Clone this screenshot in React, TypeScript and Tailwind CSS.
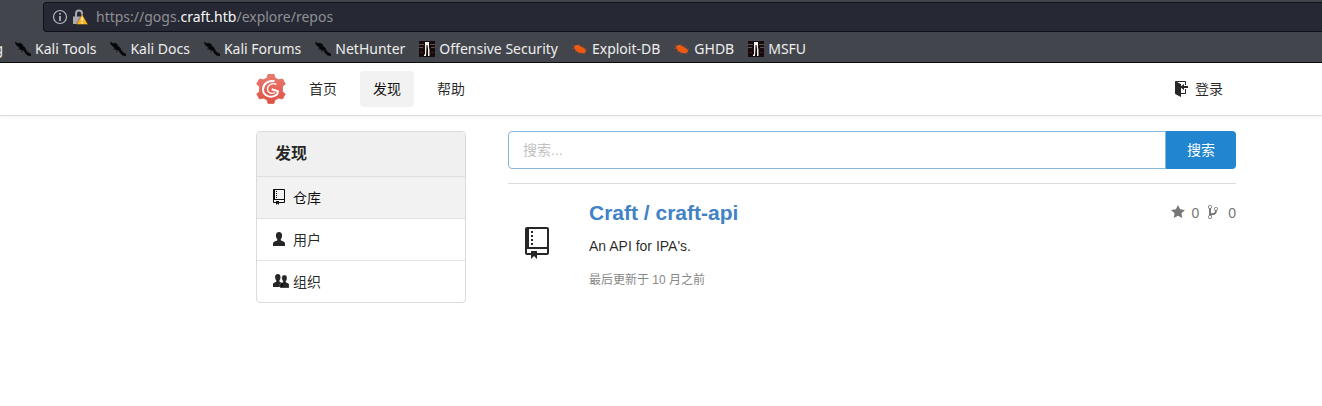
import type { ReactNode } from "react";

const REPO_PATH =
  "M4 9H3V8h1v1zm0-3H3v1h1V6zm0-2H3v1h1V4zm0-2H3v1h1V2zm8-1v12c0 .55-.45 1-1 1H6v2l-1.5-1.5L3 16v-2H1c-.55 0-1-.45-1-1V1c0-.55.45-1 1-1h10c.55 0 1 .45 1 1zm-1 10H1v2h2v-1h3v1h5v-2zm0-10H2v9h9V1z";
const SIGN_IN_PATH =
  "M7 6.75V12h4V8h1v4c0 .55-.45 1-1 1H7v3l-5.45-2.72c-.33-.17-.55-.52-.55-.91V1c0-.55.45-1 1-1h9c.55 0 1 .45 1 1v3h-1V1H3l4 2v2.25L10 3v2h4v2h-4v2L7 6.75z";
const STAR_PATH =
  "M14 6l-4.9-.64L7 1 4.9 5.36 0 6l3.6 3.26L2.67 14 7 11.67 11.33 14l-.93-4.74L14 6z";
const BRANCH_PATH =
  "M10 5c0-1.11-.89-2-2-2a1.993 1.993 0 0 0-1 3.72v.3c-.02.52-.23.98-.63 1.38-.4.4-.86.61-1.38.63-.83.02-1.48.16-2 .45V4.72a1.993 1.993 0 0 0-1-3.72C.88 1 0 1.89 0 3a2 2 0 0 0 1 1.72v6.56c-.59.35-1 .99-1 1.72 0 1.11.89 2 2 2 1.11 0 2-.89 2-2 0-.53-.2-1-.53-1.36.09-.06.48-.41.59-.47.25-.11.56-.17.94-.17 1.05-.05 1.95-.45 2.75-1.25S8.95 7.77 9 6.73h-.02C9.59 6.37 10 5.73 10 5zM2 1.8c.66 0 1.2.55 1.2 1.2 0 .65-.55 1.2-1.2 1.2C1.35 4.2.8 3.65.8 3c0-.65.55-1.2 1.2-1.2zm0 12.41c-.66 0-1.2-.55-1.2-1.2 0-.65.55-1.2 1.2-1.2.65 0 1.2.55 1.2 1.2 0 .65-.55 1.2-1.2 1.2zm6-8c-.66 0-1.2-.55-1.2-1.2 0-.65.55-1.2 1.2-1.2.65 0 1.2.55 1.2 1.2 0 .65-.55 1.2-1.2 1.2z";
const PERSON_PATH =
  "M6 0c2 0 3.100 1.400 3.100 3.600 0 1.500-.5 2.800-1.300 3.600v1c.3.500 1.200.7 2.200 1.100 1.500.5 2 1.200 2 2.700v2H0v-2c0-1.500.6-2.200 2.100-2.700 1-.4 1.900-.6 2.200-1.100v-1C3.500 6.400 2.900 5.100 2.900 3.600 2.900 1.400 4 0 6 0z";

function KaliIcon() {
  return (
    <svg viewBox="0 0 16 16" className="size-4 shrink-0" aria-hidden="true">
      <path
        d="M0 1l3 1.500 2-.5 2.500 1.500.5 2 2 1 1 2.500 2 2.500 3 1.500V15l-3.500-.7-2.500-2.500-1-2.300-2.500-.5-1.500-1L4 6 1.500 4.200z"
        fill="#050607"
        stroke="#050607"
        strokeWidth=".4"
      />
      <path d="M3 8l2 .5M6 10.500l1.500.2" stroke="#17181b" strokeWidth=".8" />
    </svg>
  );
}

function OffsecIcon() {
  return (
    <svg viewBox="0 0 16 16" className="size-4 shrink-0" aria-hidden="true">
      <path d="M0 0h16v16H0z" fill="#160b0c" />
      <path d="M0 3.500h5M11 3.500h5M0 6.500h4M12 6.500h4" stroke="#60504f" />
      <path d="M1 11.500h3M12 11.500h3" stroke="#4b1512" />
      <path d="M6 1h4v5l.5 3v6H9V8L8.500 4H7.500L7.300 10 7 15H5v-1l1-1z" fill="#f4f2ed" />
    </svg>
  );
}

function BugIcon() {
  return (
    <svg viewBox="0 0 16 16" className="size-4 shrink-0" aria-hidden="true">
      <path
        d="M2 5.500C3.500 3.200 7 3.500 9 5.500l3.500 2 1.500 2-.5 2-2.500.8-3-.3C5 11 2 8.500 2 5.500z"
        fill="#ed5b12"
      />
      <path
        d="M3 5.500L.5 4.500M3.500 7.500L0 7.300M5 10l-2 .8M7 4.500L8 3M10 6.500l2.500-1M12.500 8.500l2.500-.3M8 11.500l-1.500 1.500M12 12l.5 1.500"
        stroke="#b04a1d"
        strokeWidth=".8"
      />
    </svg>
  );
}

function GogsLogo() {
  return (
    <svg viewBox="0 0 30 30" className="size-[30px]" aria-hidden="true">
      <defs>
        <linearGradient id="gear" x1="0" y1="0" x2="0" y2="1">
          <stop offset="0" stopColor="#ea7a70" />
          <stop offset="1" stopColor="#dd5044" />
        </linearGradient>
      </defs>
      <path
        d="M12 .5h6l1 3.500 3.500 1.800L26.500 5l2.800 5L26.500 12.500v5l2.800 2.500-2.800 5-4-.8L19 26l-1 3.500h-6L11 26l-3.500-1.800-4 .8L.7 20l2.800-2.500v-5L.7 10l2.800-5 4 .8L11 4z"
        fill="url(#gear)"
        stroke="#e0665c"
        strokeWidth=".8"
        strokeLinejoin="round"
      />
      <path
        d="M18.500 7.300C12 6 7 10 7 15.500c0 6.300 8.300 9.800 14.200 4.800l.8-3-6.300-2"
        fill="none"
        stroke="#fff"
        strokeWidth="2"
        strokeLinejoin="round"
      />
      <path
        d="M20.500 10.500c-4.500-2.200-9 .5-9 4.700 0 3.500 4 5.300 7.500 3.300"
        fill="none"
        stroke="#fff"
        strokeWidth="1.300"
      />
    </svg>
  );
}

function Octicon({ d, box, className }: { d: string; box: string; className: string }) {
  return (
    <svg viewBox={box} fill="currentColor" className={className} aria-hidden="true">
      <path d={d} />
    </svg>
  );
}

const bookmarks = [
  { label: "Kali Tools", icon: <KaliIcon /> },
  { label: "Kali Docs", icon: <KaliIcon /> },
  { label: "Kali Forums", icon: <KaliIcon /> },
  { label: "NetHunter", icon: <KaliIcon /> },
  { label: "Offensive Security", icon: <OffsecIcon /> },
  { label: "Exploit-DB", icon: <BugIcon /> },
  { label: "GHDB", icon: <BugIcon /> },
  { label: "MSFU", icon: <OffsecIcon /> },
];

function BrowserChrome() {
  return (
    <div className="border-b border-[#0c0c0d] bg-[#42454b] pt-0.5 font-['Noto_Sans',sans-serif]">
      <div className="ml-[43px] flex h-[30px] items-center rounded-l border border-r-0 border-[#101116] bg-[#262833] pl-2">
        <svg viewBox="0 0 16 16" className="size-4" fill="none" stroke="#b5b6ba" aria-hidden="true">
          <circle cx="8" cy="8" r="6.500" strokeWidth="1.200" />
          <path d="M8 4v1.800M8 7v5" strokeWidth="1.700" />
        </svg>
        <svg viewBox="0 0 16 16" className="ml-1 size-4" aria-hidden="true">
          <path d="M4 8V4.500a3 3 0 0 1 6 0V7" fill="none" stroke="#a9aaae" strokeWidth="2" />
          <path d="M1 7.500h9.500V15H1z" fill="#a9aaae" />
          <path d="M10 5L16 15.500H4.500z" fill="#ffb31a" stroke="#262833" strokeWidth=".4" />
          <path d="M10.200 8.500v3.300M10.200 13v1.400" stroke="#fff" strokeWidth="1.400" />
        </svg>
        <div className="ml-2 text-sm text-[#8f9095]">
          https://gogs.<span className="text-[#f9f9fa]">craft.htb</span>/explore/repos
        </div>
      </div>
      <nav
        className="flex h-[30px] items-center gap-3.5 overflow-hidden pt-1 text-sm whitespace-nowrap text-[#eeeeef]"
        aria-label="Bookmarks"
      >
        <div className="-mr-0.5 flex w-[3px] shrink-0 justify-end">g</div>
        {bookmarks.map((b) => (
          <a key={b.label} href="#" className="flex items-center gap-1">
            {b.icon}
            <span>{b.label}</span>
          </a>
        ))}
      </nav>
    </div>
  );
}

function NavLink({ children, active = false }: { children: ReactNode; active?: boolean }) {
  return (
    <a
      href="#"
      className={
        active
          ? "flex h-9 items-center rounded bg-[#f2f2f2] px-[13px] text-black/95"
          : "flex h-9 items-center rounded px-[13px] text-black/85"
      }
    >
      {children}
    </a>
  );
}

function SideItem({ icon, label, active = false }: { icon: ReactNode; label: string; active?: boolean }) {
  return (
    <a
      href="#"
      className={
        active
          ? "flex h-[42px] items-center border-t border-[#dededf] bg-[#f2f2f2] px-4 text-black/95"
          : "flex h-[42px] items-center border-t border-[#e2e2e3] px-4 text-black/85"
      }
    >
      <span className="flex w-5 items-center">{icon}</span>
      {label}
    </a>
  );
}

export default function App() {
  return (
    <div className="min-h-screen bg-white font-['Liberation_Sans','Noto_Sans_CJK_SC',sans-serif] text-sm text-black/85">
      <BrowserChrome />

      <header className="flex h-[53px] items-center border-b border-[#dcdcdd] pr-[86px] pl-64 shadow-[0_2px_3px_rgba(0,0,0,0.04)]">
        <a href="#" aria-label="Gogs">
          <GogsLogo />
        </a>
        <nav className="ml-2.5 flex gap-2.5">
          <NavLink>首页</NavLink>
          <NavLink active>发现</NavLink>
          <NavLink>帮助</NavLink>
        </nav>
        <div className="ml-auto">
          <NavLink>
            <Octicon d={SIGN_IN_PATH} box="0 0 14 16" className="mr-[7px] h-4 w-3.5" />
            登录
          </NavLink>
        </div>
      </header>

      <main className="flex items-start gap-[42px] pt-[15px] pr-[86px] pl-64">
        <aside className="w-[210px] shrink-0 overflow-hidden rounded border border-[#dbdbdc]">
          <h4 className="flex h-11 items-center bg-[#f0f0f0] px-[18px] text-base font-bold">发现</h4>
          <nav>
            <SideItem
              active
              label="仓库"
              icon={<Octicon d={REPO_PATH} box="0 0 12 16" className="mb-0.5 h-4 w-3" />}
            />
            <SideItem
              label="用户"
              icon={<Octicon d={PERSON_PATH} box="0 0 12 14" className="mb-0.5 h-3.5 w-3" />}
            />
            <SideItem
              label="组织"
              icon={
                <svg viewBox="0 0 16 14" className="mb-0.5 h-3.5 w-4" fill="currentColor" aria-hidden="true">
                  <path d="M4.800 0c1.800 0 2.700 1.200 2.700 3.200 0 1.500-.5 2.600-1.100 3.300v1c.3.600 1 .7 1.900 1.100 1 .4 1.400 1 1.400 2V13H0v-2.600c0-1.100.5-1.700 1.600-2 .9-.3 1.400-.4 1.700-1v-1C2.600 5.700 2.100 4.600 2.100 3.200 2.100 1.200 3 0 4.800 0z" />
                  <path
                    d="M11.400 1c1.700 0 2.600 1.200 2.600 2.900 0 1.300-.4 2.400-1.100 3v1c.3.500.8.7 1.700 1 1.100.4 1.600 1 1.600 2V14H7v-3.100c0-1 .5-1.600 1.500-2 .8-.3 1.200-.5 1.500-1v-1c-.7-.6-1.200-1.700-1.200-3C8.800 2.200 9.700 1 11.400 1z"
                    stroke="#fff"
                    strokeWidth=".3"
                  />
                </svg>
              }
            />
          </nav>
        </aside>

        <section className="min-w-0 flex-1">
          <form className="flex h-[38px]" onSubmit={(e) => e.preventDefault()}>
            <input
              type="text"
              aria-label="搜索"
              placeholder="搜索..."
              className="min-w-0 flex-1 rounded-l border border-[#85b7d9] px-3.5 outline-none placeholder:text-[#bfbfbf]"
            />
            <button type="submit" className="w-[70px] rounded-r bg-[#2185d0] text-white">
              搜索
            </button>
          </form>

          <article className="mt-3.5 flex border-t border-[#dcdcdd] pt-4">
            <div className="w-[81px] shrink-0 pt-[27px] pl-[17px]">
              <Octicon d={REPO_PATH} box="0 0 12 16" className="h-8 w-6" />
            </div>
            <div className="min-w-0 flex-1">
              <div className="flex h-[26px] items-center justify-between">
                <h2 className="text-[21px] font-bold text-[#4183c4]">
                  <a href="#">Craft / craft-api</a>
                </h2>
                <div className="flex items-center text-[#767676]">
                  <Octicon d={STAR_PATH} box="0 0 14 16" className="mr-1.5 mb-0.5 h-4 w-3.5" />
                  0
                  <Octicon d={BRANCH_PATH} box="0 0 10 16" className="mr-2.5 mb-0.5 ml-[9px] h-4 w-2.5" />
                  0
                </div>
              </div>
              <p className="mt-2.5 leading-5">An API for IPA's.</p>
              <p className="mt-3.5 text-xs leading-5 text-[#888888]">最后更新于 10 月之前</p>
            </div>
          </article>
        </section>
      </main>
    </div>
  );
}
